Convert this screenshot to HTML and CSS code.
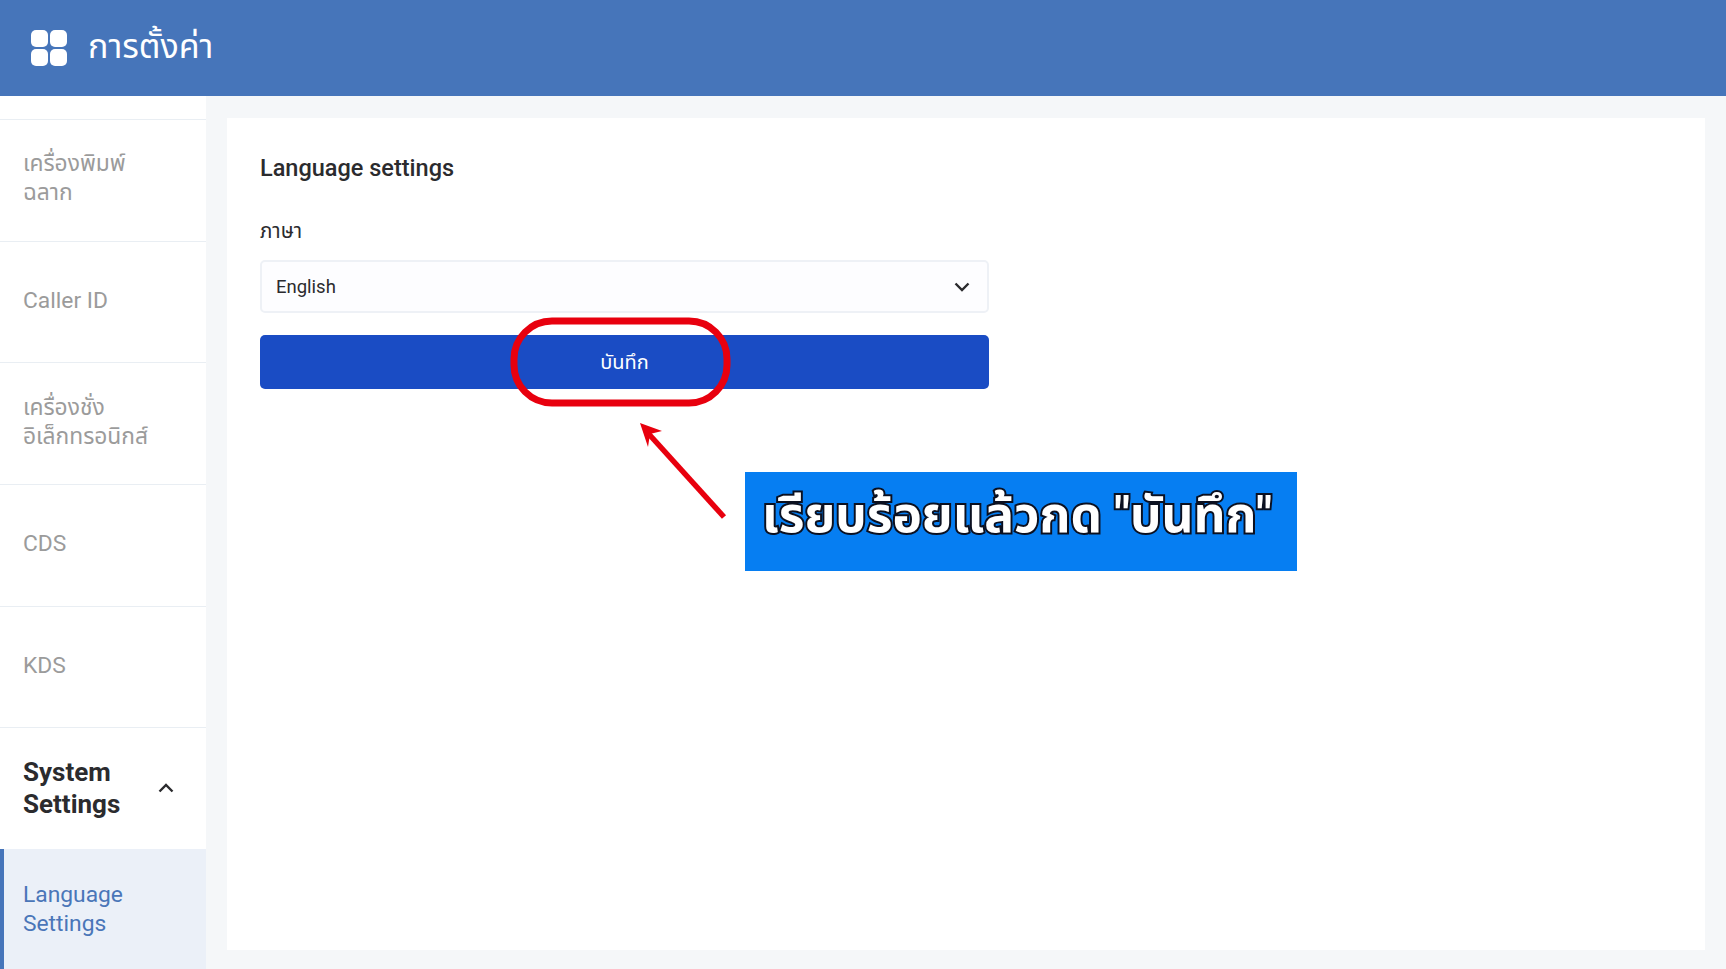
FILE: index.html
```html
<!DOCTYPE html>
<html lang="th">
<head>
<meta charset="utf-8">
<title>การตั้งค่า</title>
<link rel="stylesheet" href="styles.css">
</head>
<body>
<header class="topbar">
  <svg class="apps" viewBox="0 0 36 36" width="36" height="36"><rect x="0" y="0" width="17" height="17" rx="5"/><rect x="19" y="0" width="17" height="17" rx="5"/><rect x="0" y="19" width="17" height="17" rx="5"/><rect x="19" y="19" width="17" height="17" rx="5"/></svg>
  <h1 class="title">การตั้งค่า</h1>
</header>
<div class="body">
  <nav class="side">
    <div class="item">เครื่องพิมพ์<br>ฉลาก</div>
    <div class="item">Caller ID</div>
    <div class="item">เครื่องชั่ง<br>อิเล็กทรอนิกส์</div>
    <div class="item">CDS</div>
    <div class="item">KDS</div>
    <div class="item group"><span>System<br>Settings</span>
      <svg class="caret" viewBox="0 0 16 10" width="16" height="10"><path d="M1.5 8.5 8 2l6.5 6.5"/></svg>
    </div>
    <div class="item active">Language<br>Settings</div>
  </nav>
  <main class="content">
    <section class="card">
      <h2 class="heading">Language settings</h2>
      <label class="label">ภาษา</label>
      <div class="select"><span>English</span>
        <svg class="chev" viewBox="0 0 16 10" width="16" height="10"><path d="M1.5 1.5 8 8l6.5-6.5"/></svg>
      </div>
      <button class="save">บันทึก</button>
    </section>
  </main>
</div>
<svg class="overlay" width="1726" height="969" viewBox="0 0 1726 969">
  <rect class="ring" x="514" y="321" width="213" height="82" rx="38"/>
  <line class="shaft" x1="724" y1="517" x2="647" y2="432"/>
  <polygon class="head" points="640,423 662,431 650,434 648,447"/>
</svg>
<div class="callout">เรียบร้อยแล้วกด "บันทึก"</div>
</body>
</html>
```
FILE: styles.css
```css
* { box-sizing: border-box; }
html, body { margin: 0; height: 100%; }
body {
  width: 1726px; height: 969px; overflow: hidden; position: relative;
  font-family: Roboto, "Noto Sans", "Noto Sans Thai", sans-serif;
  background: #f5f7f9; color: #2b2b2e;
  display: flex; flex-direction: column;
}
.topbar {
  height: 96px; flex: none; background: #4675ba; color: #fff;
  display: flex; align-items: center; gap: 21px; padding: 0 0 0 31px;
}
.apps { fill: #fff; flex: none; margin-top: -1px; }
.title { margin: -4px 0 0; font-size: 34px; font-weight: 400; line-height: 1; }
.body { flex: 1; display: flex; min-height: 0; }
.side {
  width: 206px; flex: none; background: #fff; padding-top: 23px;
  display: flex; flex-direction: column;
}
.item {
  height: 121.7px; flex: none; display: flex; align-items: center;
  padding: 0 23px 4px; border-top: 1px solid #e9eef3;
  font-size: 22.8px; line-height: 29px; color: #9b9b9b;
}
.group {
  justify-content: space-between; padding: 0 32px 2px 23px;
  font-size: 26px; line-height: 32px; font-weight: 700; color: #2b2b2e;
}
.caret, .chev { fill: none; stroke: #2b2b2e; stroke-width: 2.4; flex: none; }
.active {
  background: #ebf0f8; color: #4a76b8; border-top: 0; border-left: 4px solid #4675ba;
  padding: 2px 23px 3px 19px;
}
.content { flex: 1; padding: 22px 21px 19px; }
.card { background: #fff; height: 100%; padding: 34px 33px; width: 1478px; }
.heading { margin: 0 0 35px; font-size: 23.5px; line-height: 32px; font-weight: 500; color: #2b2b2e; }
.label { display: block; font-size: 20.5px; line-height: 24px; margin-bottom: 17px; color: #2b2b2e; }
.select {
  width: 729px; height: 53px; border: 2px solid #eef1f6; border-radius: 5px; background: #fdfdff;
  display: flex; align-items: center; justify-content: space-between; padding: 0 17px 0 14px;
  font-size: 18.5px; color: #2b2b2e;
}
.save {
  display: block; width: 729px; height: 54px; margin-top: 22px; padding-top: 2px; border: 0; border-radius: 5px;
  background: #1a4cc4; color: #fff; font: inherit; font-size: 20px;
}
.overlay { position: absolute; left: 0; top: 0; pointer-events: none; }
.ring { fill: none; stroke: #e8000e; stroke-width: 7; }
.shaft { stroke: #e8000e; stroke-width: 5.5; }
.head { fill: #e8000e; }
.callout {
  position: absolute; left: 745px; top: 472px; width: 552px; height: 99px;
  background: #067ef2; color: #fff; padding: 12px 0 0 17px;
  font-size: 49.6px; line-height: 62px; font-weight: 700; white-space: nowrap;
  -webkit-text-stroke: 4px #0b1020; paint-order: stroke fill;
}
```
